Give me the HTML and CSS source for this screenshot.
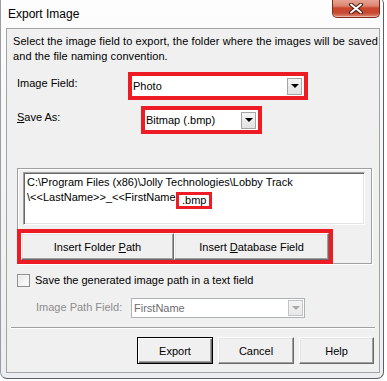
FILE: index.html
```html
<!DOCTYPE html>
<html lang="en">
<head>
    <meta charset="UTF-8">
    <meta name="viewport" content="width=device-width, initial-scale=1.0">
    <title>Export Image</title>
    <link rel="stylesheet" href="styles.css">
</head>
<body>
    <div class="window">
        <div class="titlebar">
            <span class="title">Export Image</span>
            <div class="close-btn">
                <svg width="16" height="11" viewBox="0 0 16 11">
                    <path d="M3 1.5 L13 9.5 M13 1.5 L3 9.5" stroke="#4a1d14" stroke-width="4" stroke-linecap="round"/>
                    <path d="M3 1.5 L13 9.5 M13 1.5 L3 9.5" stroke="#ffffff" stroke-width="2" stroke-linecap="round"/>
                </svg>
            </div>
        </div>
        <div class="client">
            <p class="intro">Select the image field to export, the folder where the images will be saved<br>and the file naming convention.</p>

            <div class="row row-field">
                <span class="label label-field">Image Field:</span>
                <div class="mark">
                    <div class="combo combo-field">
                        <span class="combo-text">Photo</span>
                        <span class="drop"><i class="arrow"></i></span>
                    </div>
                </div>
            </div>

            <div class="row row-save">
                <span class="label label-save"><u>S</u>ave As:</span>
                <div class="mark">
                    <div class="combo combo-save">
                        <span class="combo-text">Bitmap (.bmp)</span>
                        <span class="drop"><i class="arrow"></i></span>
                    </div>
                </div>
            </div>

            <div class="group">
                <div class="path-box">
                    C:\Program Files (x86)\Jolly Technologies\Lobby Track<br>\&lt;&lt;LastName&gt;&gt;_&lt;&lt;FirstName&gt;<span class="ext">.bmp</span>
                </div>
                <div class="mark mark-buttons">
                    <button class="btn btn-insert btn-folder">Insert Folder <u>P</u>ath</button>
                    <button class="btn btn-insert btn-db">Insert <u>D</u>atabase Field</button>
                </div>
            </div>

            <div class="check-row">
                <span class="checkbox"></span>
                <span class="check-label">Save the generated image path in a text field</span>
            </div>

            <div class="row row-path">
                <span class="label label-path">Image Path Field:</span>
                <div class="combo combo-path disabled">
                    <span class="combo-text">FirstName</span>
                    <span class="drop"><i class="arrow"></i></span>
                </div>
            </div>

            <div class="separator"></div>

            <div class="actions">
                <button class="btn btn-action btn-default">Export</button>
                <button class="btn btn-action">Cancel</button>
                <button class="btn btn-action btn-help">Help</button>
            </div>
        </div>
    </div>
</body>
</html>
```

FILE: styles.css
```css
* {
    box-sizing: border-box;
}
html, body {
    margin: 0;
    width: 387px;
    height: 381px;
    overflow: hidden;
    background: #ffffff;
}
body {
    font-family: "Liberation Sans", Arial, sans-serif;
    font-size: 11px;
    color: #000;
}
.window {
    width: 384px;
    height: 382px;
    margin-top: -3px;
    display: flex;
    flex-direction: column;
    padding: 0 3px 5px 5px;
    background: linear-gradient(#fdfdfd, #f2f3f5 60%, #eceef1);
    border-left: 1px solid #9a9ea4;
    border-right: 1px solid #5c5f63;
    border-bottom: 1px solid #5c5f63;
    border-radius: 0 7px 7px 7px;
}
.titlebar {
    height: 31px;
    display: flex;
    justify-content: space-between;
    align-items: flex-start;
    flex-shrink: 0;
}
.title {
    font-size: 12px;
    line-height: 16px;
    margin: 9px 0 0 2px;
}
.close-btn {
    width: 48px;
    height: 21px;
    display: flex;
    align-items: center;
    justify-content: center;
    padding-top: 3px;
    border: 1px solid #7d2b1e;
    border-top: none;
    border-radius: 0 0 5px 5px;
    background: linear-gradient(#eab2a5, #dc8470 45%, #c9462d 55%, #c84a31 80%, #e08b74);
    box-shadow: inset 0 -1px 0 rgba(255, 255, 255, 0.4);
}
.client {
    flex: 1;
    background: #f0f0f0;
    border: 1px solid #a3a3a3;
    display: flex;
    flex-direction: column;
}
.intro {
    margin: 0;
    padding: 5px 0 0 6px;
    line-height: 15px;
    letter-spacing: 0.08px;
}
.row {
    display: flex;
    align-items: flex-start;
    padding-left: 10px;
}
.row-field {
    margin-top: 8px;
}
.row-save {
    margin-top: 6px;
}
.label {
    line-height: 15px;
    padding-top: 4px;
}
.label-field {
    width: 111px;
}
.label-save {
    width: 124px;
}
.mark {
    border: 4px solid #ed1c24;
}
.combo {
    height: 20px;
    background: #fff;
    display: flex;
    align-items: center;
    justify-content: space-between;
    padding: 0 2px 0 1px;
}
.combo-field {
    width: 172px;
}
.combo-save {
    width: 113px;
}
.combo-text {
    line-height: 15px;
}
.drop {
    width: 15px;
    height: 17px;
    border: 1px solid #a5a5a5;
    background: linear-gradient(#f5f5f5, #e2e2e2);
    display: flex;
    align-items: center;
    justify-content: center;
}
.arrow {
    width: 0;
    height: 0;
    border-left: 4px solid transparent;
    border-right: 4px solid transparent;
    border-top: 4px solid #000;
}
.group {
    margin: 34px 7px 0 10px;
    height: 96px;
    border: 1px solid #a0a0a0;
    box-shadow: inset 1px 1px 0 #fff, 1px 1px 0 #fff;
    display: flex;
    flex-direction: column;
}
.path-box {
    margin: 3px 6px 0 5px;
    height: 53px;
    background: #fff;
    border: 1px solid;
    border-color: #a0a0a0 #fff #fff #a0a0a0;
    box-shadow: inset 1px 1px 0 #696969, inset -1px -1px 0 #e3e3e3;
    padding: 2px 0 0 3px;
    line-height: 15px;
}
.ext {
    display: inline-block;
    border: 3px solid #ed1c24;
    line-height: 11px;
    padding: 0 3px 0 3px;
    margin-left: -6px;
    vertical-align: -3px;
    background: #fff;
}
.mark-buttons {
    margin: 4px 0 -1px -1px;
    width: 316px;
    height: 35px;
    display: flex;
}
.btn {
    font-family: "Liberation Sans", Arial, sans-serif;
    font-size: 11px;
    color: #000;
    background: #f0f0f0;
    border: 1px solid;
    border-color: #fff #696969 #696969 #fff;
    box-shadow: inset -1px -1px 0 #a0a0a0, inset 1px 1px 0 #e3e3e3;
    padding: 0;
    margin: 0;
}
.btn-folder {
    width: 153px;
    height: 27px;
}
.btn-db {
    width: 155px;
    height: 27px;
}
.check-row {
    display: flex;
    align-items: center;
    margin: 9px 0 0 10px;
}
.checkbox {
    width: 13px;
    height: 13px;
    border: 1px solid #8e8f8f;
    background: linear-gradient(135deg, #e6e6e6, #ffffff);
    box-shadow: inset 0 0 0 1px #f4f4f4;
}
.check-label {
    margin-left: 5px;
    line-height: 15px;
}
.row-path {
    margin-top: 10px;
}
.label-path {
    width: 95px;
    margin-left: 19px;
    color: #8d8d8d;
    padding-top: 2px;
}
.combo-path {
    width: 174px;
    border: 1px solid #adb2b5;
    background: #fff;
    padding: 0 1px 0 2px;
}
.combo-path .combo-text {
    color: #6d6d6d;
}
.combo-path .drop {
    height: 16px;
    border-color: #c4c4c4;
    background: linear-gradient(#f4f4f4, #e8e8e8);
}
.combo-path .arrow {
    border-top-color: #a8a8a8;
}
.separator {
    margin: 9px 4px 0 4px;
    height: 2px;
    border-top: 1px solid #a0a0a0;
    border-bottom: 1px solid #fff;
}
.actions {
    display: flex;
    justify-content: flex-end;
    gap: 5px;
    margin: 8px 5px 0 0;
}
.btn-action {
    width: 76px;
    height: 27px;
}
.btn-help {
    width: 75px;
}
.btn-default {
    border: 1px solid #000;
    box-shadow: inset 1px 1px 0 #fff, inset -1px -1px 0 #696969, inset -2px -2px 0 #a0a0a0;
}
```
